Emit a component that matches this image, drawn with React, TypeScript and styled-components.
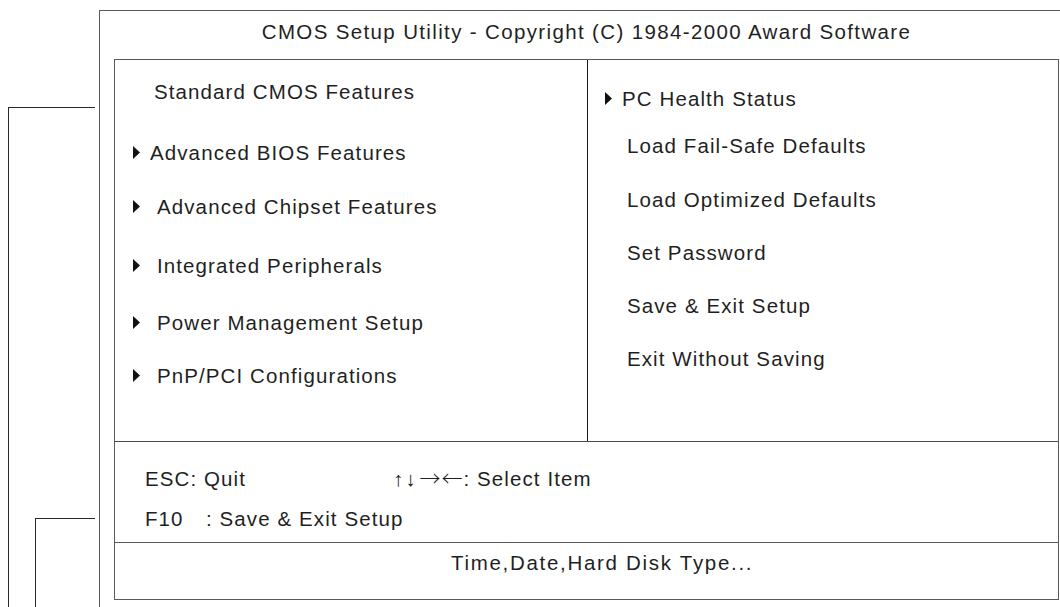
import React from "react";
import styled, { createGlobalStyle } from "styled-components";

const GlobalStyle = createGlobalStyle`
  html, body {
    margin: 0;
    padding: 0;
    background: #ffffff;
  }
  body {
    font-family: "Liberation Sans", Arial, Helvetica, sans-serif;
    color: #1f1f1f;
  }
`;

const Page = styled.div`
  display: flex;
  width: 1060px;
  height: 607px;
  overflow: hidden;
  background: #ffffff;
`;

const Gutter = styled.div`
  width: 99px;
  flex-shrink: 0;
  display: flex;
  flex-direction: column;
`;

const Leader = styled.div<{ $top: number; $left: number; $right: number }>`
  flex: 1;
  display: flex;
  flex-direction: column;
  margin-top: ${(p) => p.$top}px;
  margin-left: ${(p) => p.$left}px;
  margin-right: ${(p) => p.$right}px;
  border-left: 1px solid #2a2a2a;
  border-top: 1px solid #2a2a2a;
`;

const Frame = styled.div`
  flex: 1;
  margin-top: 10px;
  padding-left: 14px;
  border-left: 1px solid #5a5a5a;
  border-top: 1px solid #5a5a5a;
  display: flex;
  flex-direction: column;
`;

const Title = styled.div`
  width: 945px;
  height: 48px;
  box-sizing: border-box;
  padding-top: 10px;
  text-align: center;
  font-size: 20.5px;
  line-height: 22px;
  letter-spacing: 1.36px;
  white-space: nowrap;
`;

const Screen = styled.div`
  width: 945px;
  height: 541px;
  box-sizing: border-box;
  border: 1px solid #5a5a5a;
  display: flex;
  flex-direction: column;
`;

const Columns = styled.div`
  height: 382px;
  box-sizing: border-box;
  border-bottom: 1px solid #4a4a4a;
  display: grid;
  grid-template-columns: 473px 1fr;
`;

const Column = styled.div<{ $divider?: boolean }>`
  display: flex;
  flex-direction: column;
  box-sizing: border-box;
  border-right: ${(p) => (p.$divider ? "1px solid #1a1a1a" : "none")};
`;

const Item = styled.div<{ $gap: number; $pad: number }>`
  display: flex;
  align-items: center;
  height: 22px;
  margin-top: ${(p) => p.$gap}px;
  padding-left: ${(p) => p.$pad}px;
  font-size: 20.5px;
  line-height: 22px;
  letter-spacing: 1.1px;
  white-space: nowrap;
`;

const ArrowSlot = styled.span<{ $show: boolean }>`
  display: inline-flex;
  flex-shrink: 0;
  width: 7px;
  height: 13px;
  margin-top: -2px;
  visibility: ${(p) => (p.$show ? "visible" : "hidden")};
`;

const Label = styled.span<{ $indent: number }>`
  margin-left: ${(p) => p.$indent}px;
`;

const Keys = styled.div`
  height: 101px;
  box-sizing: border-box;
  border-bottom: 1px solid #5a5a5a;
  padding-top: 26px;
  padding-left: 30px;
  display: flex;
  flex-direction: column;
  gap: 18px;
`;

const KeyRow = styled.div`
  display: grid;
  grid-template-columns: 248px auto;
  height: 22px;
  font-size: 20.5px;
  line-height: 22px;
  letter-spacing: 1.1px;
  white-space: nowrap;
  color: #1f1f1f;
`;

const KeyName = styled.span`
  display: inline-block;
  width: 61px;
`;

const VArrows = styled.span`
  letter-spacing: 2px;
  margin-right: 2px;
  color: #1f1f1f;
`;

const HArrows = styled.span`
  font-family: "Noto Sans CJK JP", "Noto Sans CJK SC", sans-serif;
  font-size: 21px;
  line-height: 0;
  font-weight: 300;
  letter-spacing: 1px;
  color: #1f1f1f;
`;

const Help = styled.div`
  flex: 1;
  padding-top: 9px;
  padding-left: 336px;
  font-size: 20.5px;
  line-height: 22px;
  letter-spacing: 1.7px;
  white-space: nowrap;
`;

const Triangle = () => (
  <svg width="7" height="13" viewBox="0 0 7 13" aria-hidden="true">
    <path d="M0 0 L7 6.5 L0 13 Z" fill="#111" />
  </svg>
);

type Entry = { label: string; arrow: boolean; gap: number; indent: number };

const leftItems: Entry[] = [
  { label: "Standard CMOS Features", arrow: false, gap: 21, indent: 14 },
  { label: "Advanced BIOS Features", arrow: true, gap: 39, indent: 10 },
  { label: "Advanced Chipset Features", arrow: true, gap: 32, indent: 17 },
  { label: "Integrated Peripherals", arrow: true, gap: 37, indent: 17 },
  { label: "Power Management Setup", arrow: true, gap: 35, indent: 17 },
  { label: "PnP/PCI Configurations", arrow: true, gap: 31, indent: 17 },
];

const rightItems: Entry[] = [
  { label: "PC Health Status", arrow: true, gap: 28, indent: 10 },
  { label: "Load Fail-Safe Defaults", arrow: false, gap: 25, indent: 15 },
  { label: "Load Optimized Defaults", arrow: false, gap: 32, indent: 15 },
  { label: "Set Password", arrow: false, gap: 31, indent: 15 },
  { label: "Save & Exit Setup", arrow: false, gap: 31, indent: 15 },
  { label: "Exit Without Saving", arrow: false, gap: 31, indent: 15 },
];

const Menu = ({ items, pad }: { items: Entry[]; pad: number }) => (
  <>
    {items.map((it) => (
      <Item key={it.label} $gap={it.gap} $pad={pad}>
        <ArrowSlot $show={it.arrow}>
          <Triangle />
        </ArrowSlot>
        <Label $indent={it.indent}>{it.label}</Label>
      </Item>
    ))}
  </>
);

export default function App() {
  return (
    <>
      <GlobalStyle />
      <Page>
        <Gutter>
          <Leader $top={107} $left={8} $right={4}>
            <Leader $top={410} $left={26} $right={0} />
          </Leader>
        </Gutter>
        <Frame>
          <Title>CMOS Setup Utility - Copyright (C) 1984-2000 Award Software</Title>
          <Screen>
            <Columns>
              <Column $divider>
                <Menu items={leftItems} pad={18} />
              </Column>
              <Column>
                <Menu items={rightItems} pad={17} />
              </Column>
            </Columns>
            <Keys>
              <KeyRow>
                <span>ESC: Quit</span>
                <span>
                  <VArrows>↑↓</VArrows>
                  <HArrows>→←</HArrows>: Select Item
                </span>
              </KeyRow>
              <KeyRow>
                <span>
                  <KeyName>F10</KeyName>: Save &amp; Exit Setup
                </span>
              </KeyRow>
            </Keys>
            <Help>Time,Date,Hard Disk Type...</Help>
          </Screen>
        </Frame>
      </Page>
    </>
  );
}
